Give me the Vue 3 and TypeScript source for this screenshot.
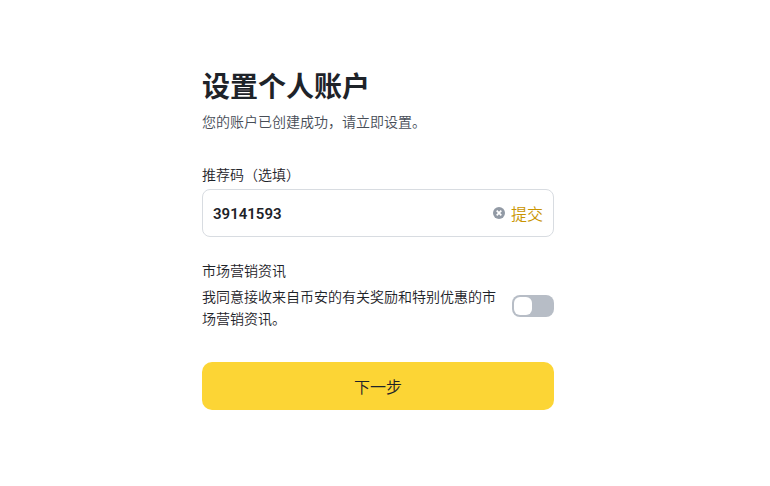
<script setup lang="ts">
import { ref } from 'vue'

const code = ref<string>('39141593')
const marketing = ref<boolean>(false)

function clearCode(): void {
  code.value = ''
}
</script>

<template>
  <main class="page">
    <form class="setup" @submit.prevent>
      <h1 class="title">设置个人账户</h1>
      <p class="subtitle">您的账户已创建成功，请立即设置。</p>

      <label class="label" for="referral">推荐码（选填）</label>
      <div class="field">
        <input id="referral" v-model="code" class="code" type="text" autocomplete="off" />
        <button class="clear" type="button" aria-label="清除" @click="clearCode">
          <svg class="clear-icon" viewBox="0 0 12 12" aria-hidden="true">
            <circle cx="6" cy="6" r="6" fill="#929aa5" />
            <path d="M3.7 3.7l4.6 4.6M8.3 3.7l-4.6 4.6" stroke="#fff" stroke-width="1.7" />
          </svg>
        </button>
        <button class="submit" type="button">提交</button>
      </div>

      <h2 class="section">市场营销资讯</h2>
      <div class="consent">
        <label class="consent-text" for="marketing">我同意接收来自币安的有关奖励和特别优惠的市场营销资讯。</label>
        <input id="marketing" v-model="marketing" class="switch" type="checkbox" role="switch" />
      </div>

      <button class="next" type="submit">下一步</button>
    </form>
  </main>
</template>

<style>
body {
  background: #fff;
}
</style>

<style scoped>
.page {
  display: flex;
  justify-content: center;
  padding: 67px 14px 32px 0;
  color: #1e2329;
  font-family: "Noto Sans CJK SC", sans-serif;
  font-size: 14px;
  font-weight: 350;
  line-height: 22px;
}

.setup {
  width: 100%;
  max-width: 352px;
}

.title {
  margin: 0 0 7px;
  font-size: 28px;
  font-weight: 700;
  line-height: 36px;
}

.subtitle {
  margin: 0 0 31px;
  color: #474d57;
}

.label {
  display: block;
  margin-bottom: 4px;
}

.field {
  display: flex;
  align-items: center;
  box-sizing: border-box;
  height: 48px;
  padding: 0 10px;
  border: 1px solid #d8dce1;
  border-radius: 8px;
}

.field:focus-within {
  border-color: #f0b90b;
}

button {
  padding: 0;
  border: 0;
  background: none;
  color: inherit;
  font-family: inherit;
  font-weight: inherit;
  cursor: pointer;
}

.code {
  flex: 1;
  min-width: 0;
  padding: 2px 0 0;
  border: 0;
  outline: 0;
  background: none;
  color: inherit;
  font-family: Roboto, sans-serif;
  font-size: 15px;
  font-weight: 600;
  line-height: 22px;
}

.clear {
  display: flex;
  margin-right: 6px;
}

.clear-icon {
  width: 12px;
  height: 12px;
}

.submit {
  color: #c99400;
  font-size: 16px;
  line-height: 24px;
}

.section {
  margin: 22px 0 4px;
  font-size: 14px;
  font-weight: inherit;
  line-height: 22px;
}

.consent {
  display: flex;
  align-items: flex-start;
  gap: 16px;
}

.consent-text {
  flex: 1;
}

.switch {
  flex: none;
  appearance: none;
  box-sizing: border-box;
  width: 42px;
  height: 22px;
  margin: 10px 0 0;
  padding: 2px;
  border-radius: 8px;
  background: #b7bdc6;
  cursor: pointer;
}

.switch::before {
  content: "";
  display: block;
  width: 18px;
  height: 18px;
  border-radius: 6px;
  background: #fff;
}

.switch:checked {
  background: #fcd535;
}

.switch:checked::before {
  margin-left: auto;
}

.next {
  display: block;
  width: 100%;
  height: 48px;
  margin-top: 33px;
  border-radius: 10px;
  background: #fcd535;
  font-size: 16px;
  line-height: 24px;
}
</style>
